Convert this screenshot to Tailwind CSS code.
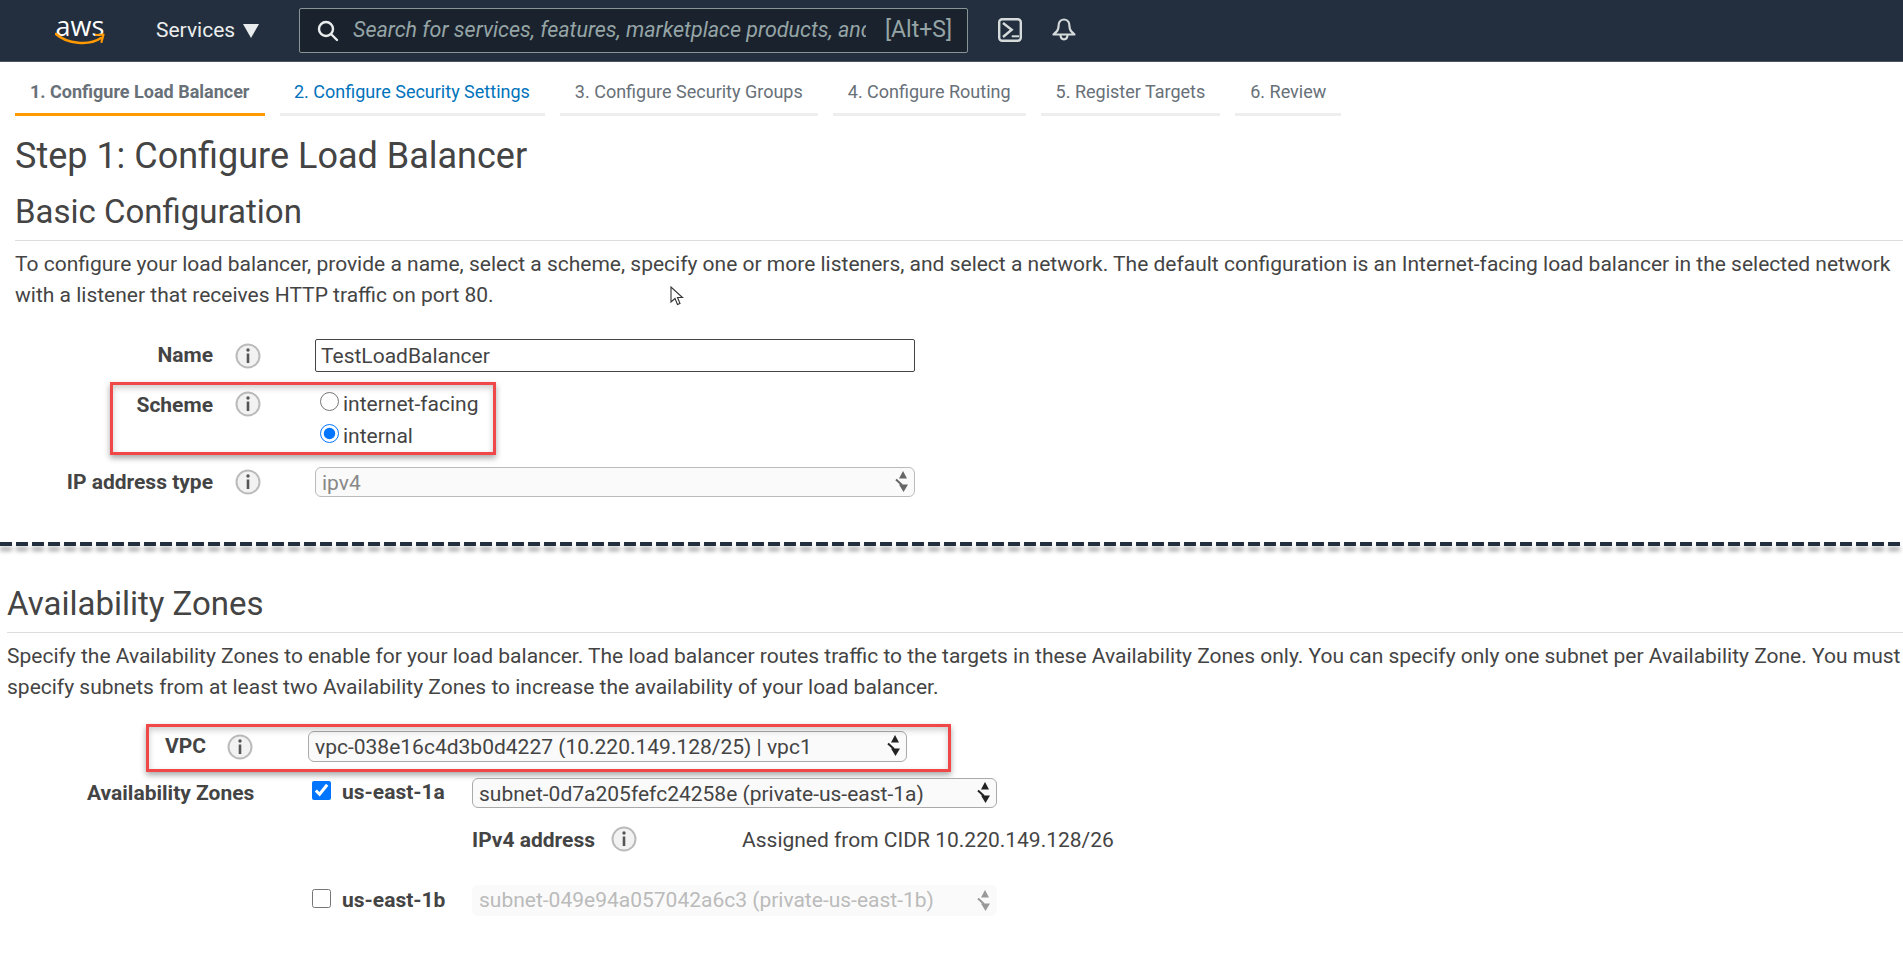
<!doctype html>
<html>
<head>
<meta charset="utf-8">
<title>Configure Load Balancer</title>
<script src="https://cdn.jsdelivr.net/npm/@tailwindcss/browser@4"></script>
</head>
<body class="bg-white font-[Roboto,sans-serif] text-[21px] text-[#444] overflow-hidden h-[955px]">

<!-- top nav -->
<header class="flex items-center h-[62px] bg-[#232f3e] border-b border-[#4a5460]">
    <div class="relative w-[50px] h-[32px] ml-[55px] -mt-[2px]">
        <span class="block text-center font-['Open_Sans',sans-serif] text-[27px] leading-[24px] text-white">aws</span>
        <svg class="absolute left-0 bottom-0" width="50" height="14" viewBox="0 0 50 14" fill="none">
            <path d="M1 2C12 12 34 14 46 6" stroke="#ff9900" stroke-width="2.6" stroke-linecap="round"/>
            <path d="M41 3L48.5 2.5L46.5 10" stroke="#ff9900" stroke-width="2.2" stroke-linecap="round" stroke-linejoin="round"/>
        </svg>
    </div>
    <span class="ml-[51px] w-[78px] text-[#eaeded] whitespace-nowrap">Services</span>
    <svg class="ml-[9px]" width="16" height="14" viewBox="0 0 16 14"><path d="M0 0H16L8 14Z" fill="#eaeded"/></svg>
    <div class="flex items-center ml-[40px] w-[669px] h-[45px] bg-[#1a222d] border border-[#879596] rounded-[2px]">
        <svg class="ml-[17px] shrink-0" width="22" height="22" viewBox="0 0 22 22" fill="none" stroke="#eaeded" stroke-width="2.4">
            <circle cx="9" cy="9" r="7"/>
            <path d="M14 14L20 20" stroke-linecap="round"/>
        </svg>
        <input class="ml-[14px] w-[513px] shrink-0 bg-transparent outline-none italic text-[21.5px] text-[#95a5a6] placeholder:text-[#95a5a6] placeholder:opacity-100" placeholder="Search for services, features, marketplace products, and docs">
        <span class="ml-[19px] text-[23px] text-[#95a5a6] whitespace-nowrap">[Alt+S]</span>
    </div>
    <svg class="ml-[30px] -mt-[1px]" width="24" height="24" viewBox="0 0 24 24" fill="none" stroke="#d5dbdb">
        <rect x="1.2" y="1.2" width="21.6" height="21.6" rx="3" stroke-width="2.4"/>
        <path d="M5 5L13.7 11.7L5 19" stroke-width="2.4"/>
        <path d="M13.7 18.3H21" stroke-width="2"/>
    </svg>
    <svg class="ml-[30px] -mt-[1px]" width="24" height="24" viewBox="0 0 24 24" fill="none" stroke="#d5dbdb" stroke-width="2.2" stroke-linejoin="round">
        <path d="M12 1.5C8 1.5 6.5 5 6.5 8.5C6.5 12.5 4.5 14 1.5 16.5H22.5C19.5 14 17.5 12.5 17.5 8.5C17.5 5 16 1.5 12 1.5Z"/>
        <path d="M8.5 16.5C8.5 23 15.5 23 15.5 16.5"/>
    </svg>
</header>

<!-- wizard tabs -->
<nav class="flex gap-[15px] pl-[15px] text-[18px] text-[#687078]">
    <div class="flex items-center w-[250px] h-[54px] pt-[8px] pl-[15px] border-b-[3px] border-[#ff9900] font-bold whitespace-nowrap">1. Configure Load Balancer</div>
    <div class="flex items-center h-[54px] pt-[8px] pl-[14px] pr-[15px] border-b-[3px] border-[#eee] text-[#0073bb]">2. Configure Security Settings</div>
    <div class="flex items-center h-[54px] pt-[8px] px-[15px] border-b-[3px] border-[#eee]">3. Configure Security Groups</div>
    <div class="flex items-center h-[54px] pt-[8px] px-[15px] border-b-[3px] border-[#eee]">4. Configure Routing</div>
    <div class="flex items-center h-[54px] pt-[8px] px-[15px] border-b-[3px] border-[#eee]">5. Register Targets</div>
    <div class="flex items-center h-[54px] pt-[8px] px-[15px] border-b-[3px] border-[#eee]">6. Review</div>
</nav>

<!-- basic configuration -->
<section class="pl-[15px]">
    <h1 class="h-[78px] text-[36px] leading-[80px] text-[#444]">Step 1: Configure Load Balancer</h1>
    <h2 class="h-[47px] text-[33px] leading-[36px] border-b border-[#ddd] text-[#444]">Basic Configuration</h2>
    <p class="mt-[8px] pr-[10px] leading-[31px]">To configure your load balancer, provide a name, select a scheme, specify one or more listeners, and select a network. The default configuration is an Internet-facing load balancer in the selected network with a listener that receives HTTP traffic on port 80.</p>

    <div class="flex items-center mt-[28px] h-[33px]">
        <label class="w-[198px] text-right font-bold">Name</label>
        <svg class="ml-[22px]" width="26" height="26" viewBox="0 0 26 26"><circle cx="13" cy="13" r="11.5" fill="#f2f2f2" stroke="#bbb" stroke-width="2"/><path d="M13 10.5V20" stroke="#555" stroke-width="2.6"/><circle cx="13" cy="7" r="1.7" fill="#555"/></svg>
        <input class="ml-[54px] w-[600px] h-[33px] px-[5px] border border-[#444] rounded-[2px] text-[#444]" value="TestLoadBalancer">
    </div>

    <div class="relative flex mt-[16px]">
        <label class="w-[198px] h-[32px] leading-[34px] text-right font-bold">Scheme</label>
        <svg class="ml-[22px] mt-[3px]" width="26" height="26" viewBox="0 0 26 26"><circle cx="13" cy="13" r="11.5" fill="#f2f2f2" stroke="#bbb" stroke-width="2"/><path d="M13 10.5V20" stroke="#555" stroke-width="2.6"/><circle cx="13" cy="7" r="1.7" fill="#555"/></svg>
        <div class="ml-[59px]">
            <div class="flex items-center h-[32px]"><input type="radio" name="scheme" class="w-[19px] h-[19px] accent-[#0075ff] -mt-[6px]"><span class="ml-[4px] pt-[2px]">internet-facing</span></div>
            <div class="flex items-center h-[32px]"><input type="radio" name="scheme" checked class="w-[19px] h-[19px] accent-[#0075ff] -mt-[6px]"><span class="ml-[4px] pt-[2px]">internal</span></div>
        </div>
        <div class="absolute left-[95px] -top-[6px] w-[386px] h-[73px] border-[3px] border-[#f04848] shadow-[0_3px_6px_rgba(0,0,0,0.35),inset_0_3px_6px_rgba(0,0,0,0.2)]"></div>
    </div>

    <div class="flex items-center mt-[15px] h-[30px]">
        <label class="w-[198px] pt-[2px] text-right font-bold">IP address type</label>
        <svg class="ml-[22px]" width="26" height="26" viewBox="0 0 26 26"><circle cx="13" cy="13" r="11.5" fill="#f2f2f2" stroke="#bbb" stroke-width="2"/><path d="M13 10.5V20" stroke="#555" stroke-width="2.6"/><circle cx="13" cy="7" r="1.7" fill="#555"/></svg>
        <div class="relative ml-[54px] w-[600px] h-[30px]">
            <select disabled class="appearance-none w-full h-full pl-[6px] pb-[2px] bg-[#fafafa] border border-[#bbb] rounded-[6px] text-[#888]"><option>ipv4</option></select>
            <svg class="absolute right-[6px] top-[4px]" width="14" height="21" viewBox="0 0 14 21" fill="#666"><path d="M8 0L12 7.5H4Z"/><path d="M4 13.5H13L8.5 21Z"/><path d="M1 8.5L7 14" fill="none" stroke="#666" stroke-width="2"/></svg>
        </div>
    </div>
</section>

<!-- dashed cut line -->
<div class="mt-[45px] h-[4px] bg-[repeating-linear-gradient(90deg,#232f3e_0_12px,transparent_12px_16px)] drop-shadow-[0_5px_2px_rgba(0,0,0,0.35)]"></div>

<!-- availability zones -->
<section class="pl-[7px]">
    <h2 class="mt-[40px] h-[47px] text-[33px] leading-[36px] border-b border-[#ddd] text-[#444]">Availability Zones</h2>
    <p class="mt-[8px] leading-[31px]">Specify the Availability Zones to enable for your load balancer. The load balancer routes traffic to the targets in these Availability Zones only. You can specify only one subnet per Availability Zone. You must specify subnets from at least two Availability Zones to increase the availability of your load balancer.</p>

    <div class="relative flex items-center mt-[28px] h-[31px]">
        <label class="w-[199px] text-right font-bold">VPC</label>
        <svg class="ml-[21px]" width="26" height="26" viewBox="0 0 26 26"><circle cx="13" cy="13" r="11.5" fill="#f2f2f2" stroke="#bbb" stroke-width="2"/><path d="M13 10.5V20" stroke="#555" stroke-width="2.6"/><circle cx="13" cy="7" r="1.7" fill="#555"/></svg>
        <div class="relative ml-[55px] w-[599px] h-[31px]">
            <select class="appearance-none w-full h-full pl-[6px] pb-[3px] bg-[#fafafa] border border-[#aaa] rounded-[6px] text-[#444]"><option>vpc-038e16c4d3b0d4227 (10.220.149.128/25) | vpc1</option></select>
            <svg class="absolute right-[6px] top-[4px]" width="14" height="21" viewBox="0 0 14 21" fill="#222"><path d="M8 0L12 7.5H4Z"/><path d="M4 13.5H13L8.5 21Z"/><path d="M1 8.5L7 14" fill="none" stroke="#222" stroke-width="2"/></svg>
        </div>
        <div class="absolute left-[139px] -top-[7px] w-[805px] h-[48px] border-[3px] border-[#f04848] shadow-[0_3px_6px_rgba(0,0,0,0.35),inset_0_3px_6px_rgba(0,0,0,0.2)]"></div>
    </div>

    <div class="flex items-center mt-[16px] h-[30px]">
        <label class="w-[305px] pl-[80px] pt-[2px] font-bold">Availability Zones</label>
        <input type="checkbox" checked class="w-[19px] h-[19px] accent-[#0075ff] -mt-[5px]">
        <span class="ml-[11px] w-[130px] font-bold">us-east-1a</span>
        <div class="relative w-[525px] h-[30px]">
            <select class="appearance-none w-full h-full pl-[6px] pb-[2px] bg-[#fafafa] border border-[#aaa] rounded-[6px] text-[#444]"><option>subnet-0d7a205fefc24258e (private-us-east-1a)</option></select>
            <svg class="absolute right-[6px] top-[4px]" width="14" height="21" viewBox="0 0 14 21" fill="#222"><path d="M8 0L12 7.5H4Z"/><path d="M4 13.5H13L8.5 21Z"/><path d="M1 8.5L7 14" fill="none" stroke="#222" stroke-width="2"/></svg>
        </div>
    </div>

    <div class="flex items-center mt-[17px] h-[30px] pl-[465px]">
        <label class="w-[123px] pt-[2px] font-bold whitespace-nowrap">IPv4 address</label>
        <svg class="ml-[16px] -mt-[3px]" width="26" height="26" viewBox="0 0 26 26"><circle cx="13" cy="13" r="11.5" fill="#f2f2f2" stroke="#bbb" stroke-width="2"/><path d="M13 10.5V20" stroke="#555" stroke-width="2.6"/><circle cx="13" cy="7" r="1.7" fill="#555"/></svg>
        <span class="ml-[105px] pt-[2px]">Assigned from CIDR 10.220.149.128/26</span>
    </div>

    <div class="flex items-center mt-[30px] h-[31px] pl-[305px]">
        <input type="checkbox" class="w-[19px] h-[19px] accent-[#0075ff] -mt-[4px]">
        <span class="ml-[11px] w-[130px] font-bold">us-east-1b</span>
        <div class="relative w-[525px] h-[31px]">
            <select disabled class="appearance-none w-full h-full pl-[7px] bg-[#fafafa] rounded-[6px] text-[#bbb]"><option>subnet-049e94a057042a6c3 (private-us-east-1b)</option></select>
            <svg class="absolute right-[6px] top-[5px]" width="14" height="21" viewBox="0 0 14 21" fill="#999"><path d="M8 0L12 7.5H4Z"/><path d="M4 13.5H13L8.5 21Z"/><path d="M1 8.5L7 14" fill="none" stroke="#999" stroke-width="2"/></svg>
        </div>
    </div>
</section>

<!-- mouse pointer in the capture -->
<svg class="absolute left-[670px] top-[286px]" width="14" height="20" viewBox="0 0 14 20"><path d="M1 1V16L5 12.5L7.5 18.5L10 17.5L7.5 11.5H12.5Z" fill="#fff" stroke="#333" stroke-width="1.1"/></svg>

</body>
</html>
